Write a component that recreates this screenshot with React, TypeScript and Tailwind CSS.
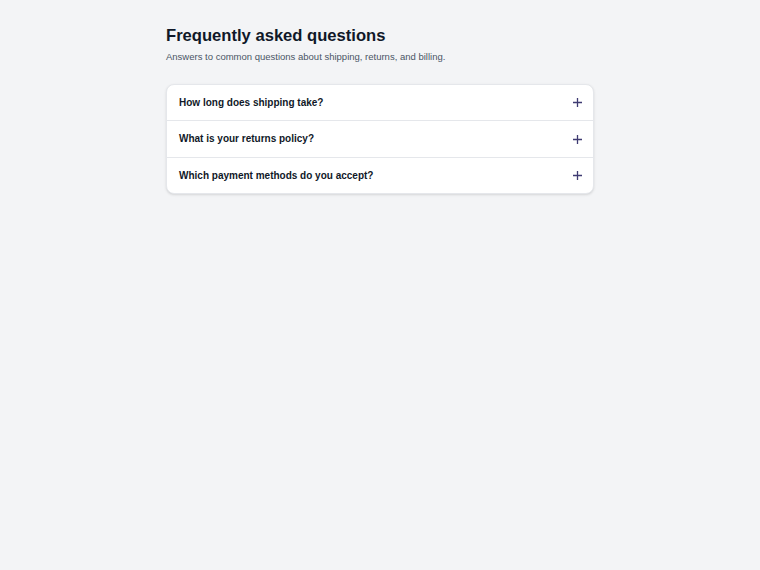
import React from "react";

const items = [
  { q: "How long does shipping take?", h: "h-[35px]" },
  { q: "What is your returns policy?", h: "h-[37px] border-t border-gray-200" },
  { q: "Which payment methods do you accept?", h: "h-[36px] border-t border-gray-200" },
];

function PlusIcon() {
  return (
    <svg width="9" height="9" viewBox="0 0 9 9" fill="none" stroke="#3f3b72" strokeWidth="1.3">
      <path d="M4.5 0v9M0 4.5h9" />
    </svg>
  );
}

export default function App() {
  return (
    <div className="min-h-screen bg-gray-100" style={{ fontFamily: '"Liberation Sans", Arial, sans-serif' }}>
      <div className="mx-auto w-[428px] pt-[26px]">
        <h1 className="text-[16.6px] leading-[20px] font-bold text-gray-900">Frequently asked questions</h1>
        <p className="mt-[4px] text-[9.5px] leading-[14px] text-gray-600">
          Answers to common questions about shipping, returns, and billing.
        </p>
        <div className="mt-[20px] rounded-lg border border-gray-200 bg-white shadow-sm">
          {items.map(({ q, h }) => (
            <button
              key={q}
              className={`flex w-full items-center justify-between pl-[12px] pr-[11px] text-left ${h}`}
            >
              <span className="text-[10px] leading-[14px] font-bold text-gray-900">{q}</span>
              <PlusIcon />
            </button>
          ))}
        </div>
      </div>
    </div>
  );
}
